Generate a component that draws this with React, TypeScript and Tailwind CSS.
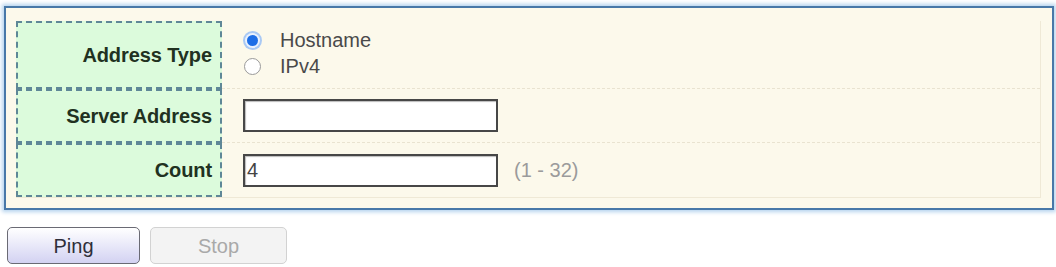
import React from "react";

function Label({ text, h }: { text: string; h: string }) {
  return (
    <div
      className={`w-[206px] ${h} shrink-0 bg-[#dcfbdc] border-2 border-dashed border-[#5f8797] flex items-center justify-end pr-[8px]`}
    >
      <span className="text-[20px] font-bold text-[#213121] tracking-[-0.1px]">{text}</span>
    </div>
  );
}

function Radio({ checked }: { checked?: boolean }) {
  if (checked) {
    return (
      <span className="w-[19px] h-[19px] rounded-full bg-[#a9c9f4] flex items-center justify-center shrink-0">
        <span className="w-[15px] h-[15px] rounded-full bg-[#eaf2fd] flex items-center justify-center">
          <span className="w-[11px] h-[11px] rounded-full bg-[#1d6ee6]" />
        </span>
      </span>
    );
  }
  return (
    <span className="w-[19px] h-[19px] flex items-center justify-center shrink-0">
      <span className="w-[17px] h-[17px] rounded-full bg-white border-[1.5px] border-[#9a9a9a]" />
    </span>
  );
}

function TextInput({ value }: { value?: string }) {
  return (
    <div className="w-[255px] h-[33px] border-2 border-[#474747] bg-white shadow-[inset_1px_1px_1px_#bbb] flex items-center pl-[2px] text-[20px] text-[#444]">
      {value}
    </div>
  );
}

export default function App() {
  return (
    <div className="w-[1056px] h-[267px] bg-white overflow-hidden font-['Liberation_Sans',Arial,sans-serif]">
      <div className="pt-[6px] pl-[4px]">
        <div className="w-[1050px] h-[204px] border-2 border-[#4878a8] shadow-[0_0_4px_2px_#b5d3ee] bg-[#fcf9eb] pt-[13px] pl-[10px]">
          <div className="w-[1025px] flex border-r border-[#efe9d6] border-b">
            <div className="flex flex-col">
              <Label text="Address Type" h="h-[68px]" />
              <Label text="Server Address" h="h-[54px]" />
              <Label text="Count" h="h-[54px]" />
            </div>
            <div className="flex-1 flex flex-col">
              <div className="h-[68px] border-b border-dashed border-[#e9e3d0] pl-[21px] pt-[6px] flex flex-col text-[20px] text-[#4a4a4a]">
                <div className="flex items-center h-[26px] gap-[18px]">
                  <Radio checked />
                  <span>Hostname</span>
                </div>
                <div className="flex items-center h-[26px] gap-[18px]">
                  <Radio />
                  <span>IPv4</span>
                </div>
              </div>
              <div className="h-[54px] border-b border-dashed border-[#e9e3d0] pl-[21px] flex items-center">
                <TextInput />
              </div>
              <div className="h-[54px] pl-[21px] flex items-center gap-[16px]">
                <TextInput value="4" />
                <span className="text-[20px] text-[#9b9b9b]">(1 - 32)</span>
              </div>
            </div>
          </div>
        </div>
      </div>
      <div className="mt-[17px] pl-[7px] flex gap-[10px]">
        <button className="w-[133px] h-[37px] rounded-[5px] border-[1.5px] border-[#6a6a74] bg-gradient-to-b from-white to-[#d3d2f2] text-[20px] text-[#2e2e3a] flex items-center justify-center">
          Ping
        </button>
        <button className="w-[137px] h-[37px] rounded-[5px] border-[1.5px] border-[#d2d2d2] bg-[#f3f3f3] text-[20px] text-[#a9a9a9] flex items-center justify-center">
          Stop
        </button>
      </div>
    </div>
  );
}
